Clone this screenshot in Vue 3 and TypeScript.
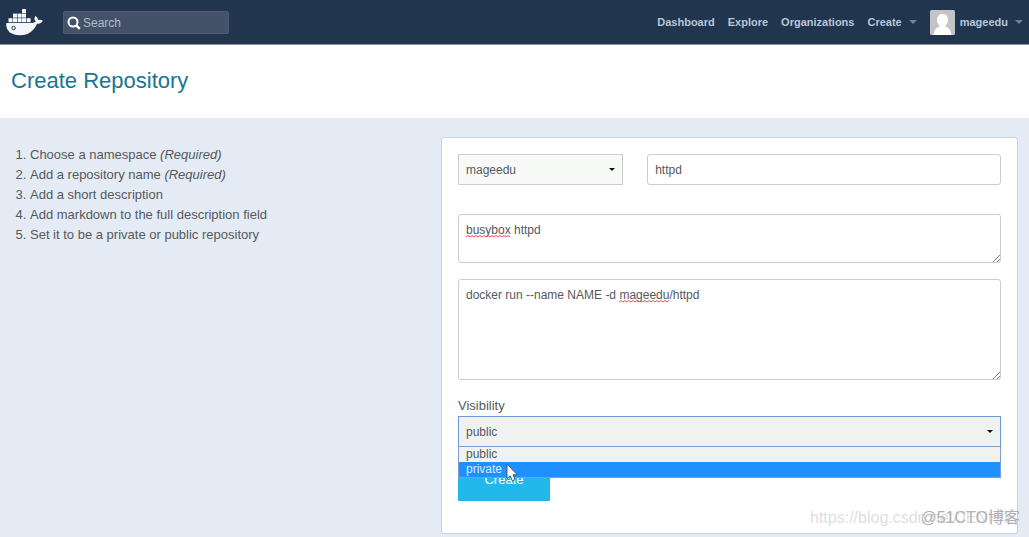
<script setup lang="ts">
import { ref } from 'vue'

interface Step {
  text: string
  required?: boolean
}

const links: string[] = ['Dashboard', 'Explore', 'Organizations']
const steps: Step[] = [
  { text: 'Choose a namespace', required: true },
  { text: 'Add a repository name', required: true },
  { text: 'Add a short description' },
  { text: 'Add markdown to the full description field' },
  { text: 'Set it to be a private or public repository' },
]
const options: string[] = ['public', 'private']

const query = ref('')
const namespace = ref('mageedu')
const repoName = ref('httpd')
const shortText = ref('busybox httpd')
const fullText = ref('docker run --name NAME -d mageedu/httpd')
const visibility = ref('public')
const highlighted = ref('private')
</script>

<template>
  <div class="page">
    <header class="topbar">
      <a class="logo" href="#" aria-label="Docker Hub">
        <svg viewBox="0 0 37 27" width="37" height="27" aria-hidden="true">
          <g fill="#f4f8fc">
            <rect x="16" y="0" width="4" height="4" />
            <rect x="7" y="4.600" width="4" height="4" />
            <rect x="11.600" y="4.600" width="4" height="4" />
            <rect x="16" y="4.600" width="4" height="4" />
            <rect x="2.500" y="9.200" width="4" height="4" />
            <rect x="7" y="9.200" width="4" height="4" />
            <rect x="11.600" y="9.200" width="4" height="4" />
            <rect x="16" y="9.200" width="4" height="4" />
            <rect x="20.600" y="9.200" width="4" height="4" />
            <path d="M.3 14H25.500C27.500 14 29 13.400 29.800 12.600C28 10.800 28.100 8.500 29.600 7C31.400 8.200 32 9.700 31.900 11C33.500 10.500 35.500 10.700 36.800 11.700C35.600 14 33.400 14.900 31 14.800C28.300 21.500 22.600 26.300 14 26.300C5 26.300-.4 22 .3 14Z" />
          </g>
          <circle cx="7.600" cy="19" r="1.700" fill="#fff" stroke="#22354f" stroke-width="1" />
        </svg>
      </a>
      <label class="search">
        <svg viewBox="0 0 14 14" width="14" height="14" aria-hidden="true">
          <circle cx="6" cy="6" r="4.500" fill="none" stroke="#fff" stroke-width="2" />
          <path d="M9.300 9.300 12.800 12.800" stroke="#fff" stroke-width="2.400" />
        </svg>
        <input v-model="query" type="search" placeholder="Search" aria-label="Search" />
      </label>
      <nav class="nav">
        <a v-for="link in links" :key="link" href="#">{{ link }}</a>
        <button type="button" class="menu">Create<span class="caret"></span></button>
        <button type="button" class="menu">
          <svg class="avatar" viewBox="0 0 25 25" width="25" height="25" aria-hidden="true">
            <rect width="25" height="25" rx="1.500" fill="#c3c4c5" />
            <path d="M3.500 25C4 20 6.500 17.500 10 16.200C7.800 14.500 7 12 7 9.500C7 6 9.300 4 12.500 4S18 6 18 9.500C18 12 17.200 14.500 15 16.200C18.500 17.500 21 20 21.500 25Z" fill="#fff" />
          </svg>
          <span>mageedu</span><span class="caret"></span>
        </button>
      </nav>
    </header>

    <div class="heading"><h1>Create Repository</h1></div>

    <main class="content">
      <ol class="steps">
        <li v-for="step in steps" :key="step.text">
          {{ step.text }} <em v-if="step.required">(Required)</em>
        </li>
      </ol>

      <form class="card" @submit.prevent>
        <div class="row">
          <div class="select">
            <select v-model="namespace" class="field" aria-label="Namespace">
              <option>mageedu</option>
            </select>
            <span class="arrow"></span>
          </div>
          <input v-model="repoName" class="field" type="text" aria-label="Repository name" />
        </div>
        <div class="area">
          <textarea v-model="shortText" class="field short" aria-label="Short description" spellcheck="false"></textarea>
          <svg class="squiggle first" aria-hidden="true"><use href="#wave" /></svg>
          <svg class="grip" viewBox="0 0 8 8" aria-hidden="true"><path d="M1 8 8 1M5 8 8 5" /></svg>
        </div>
        <div class="area">
          <textarea v-model="fullText" class="field full" aria-label="Full description" spellcheck="false"></textarea>
          <svg class="squiggle second" aria-hidden="true"><use href="#wave" /></svg>
          <svg class="grip" viewBox="0 0 8 8" aria-hidden="true"><path d="M1 8 8 1M5 8 8 5" /></svg>
        </div>
        <svg class="defs" aria-hidden="true">
          <defs>
            <pattern id="zigzag" width="4" height="3" patternUnits="userSpaceOnUse">
              <path d="M0 2 2 .5 4 2" fill="none" stroke="#e8505c" stroke-width="1" />
            </pattern>
            <rect id="wave" width="100" height="3" fill="url(#zigzag)" />
          </defs>
        </svg>
        <label class="caption" for="visibility">Visibility</label>
        <div class="select open">
          <select id="visibility" v-model="visibility" class="field">
            <option v-for="option in options" :key="option">{{ option }}</option>
          </select>
          <span class="arrow"></span>
          <ul class="dropdown" role="listbox" aria-label="Visibility">
            <li
              v-for="option in options"
              :key="option"
              role="option"
              :aria-selected="option === highlighted"
              :class="{ active: option === highlighted }"
              @mouseenter="highlighted = option"
              @click="visibility = option"
            >{{ option }}</li>
          </ul>
          <svg class="pointer" viewBox="0 0 12 19" width="12" height="19" aria-hidden="true">
            <path d="M1 1V15.500L4.200 12.800 6.300 17.800 9 16.700 7 11.800H11.300Z" fill="#fff" stroke="#46586e" stroke-width="1" />
          </svg>
        </div>
        <button type="submit" class="submit">Create</button>
      </form>
    </main>

    <div class="marks">
      <span class="site">https://blog.csdn.net/JENHfE</span>
      <span class="brand">@51CTO博客</span>
    </div>
  </div>
</template>

<style>
body {
  margin: 0;
  background: #e4ebf4;
}
</style>

<style scoped>
.page {
  position: relative;
  box-sizing: border-box;
  min-height: 100vh;
  color: #55595c;
  font-family: "Liberation Sans", Arial, sans-serif;
  font-size: 13px;
}
.page * {
  box-sizing: border-box;
}
.topbar {
  display: flex;
  align-items: center;
  height: 45px;
  padding: 0 6px;
  background: #22354f;
  border-bottom: 1px solid #8c959f;
}
.logo {
  display: flex;
  margin-right: 20px;
}
.search {
  display: flex;
  align-items: center;
  gap: 2px;
  width: 166px;
  height: 23px;
  padding: 1px 3px 0;
  border: 1px solid #4b5b71;
  border-radius: 2px;
  background: #435269;
}
.search svg {
  flex: none;
}
.search input {
  width: 100%;
  min-width: 0;
  padding: 0;
  border: 0;
  outline: 0;
  background: none;
  color: #fff;
  font: 12px "Liberation Sans", Arial, sans-serif;
}
.search input::placeholder {
  color: #b4bcc8;
}
.nav {
  display: flex;
  align-items: center;
  gap: 13px;
  margin-left: auto;
}
.nav a,
.menu {
  color: #b8c6d9;
  font: bold 11px "Liberation Sans", Arial, sans-serif;
  text-decoration: none;
}
.menu {
  display: flex;
  align-items: center;
  padding: 0;
  border: 0;
  background: none;
}
.caret {
  margin-left: 7px;
  border: 4px solid transparent;
  border-top-color: #71839b;
  border-bottom: 0;
}
.avatar {
  margin-right: 5px;
}
.heading {
  padding: 23px 11px 25px;
  background: #fff;
}
h1 {
  margin: 0;
  color: #187693;
  font-size: 22px;
  font-weight: 400;
  line-height: 25px;
}
.content {
  display: grid;
  grid-template-columns: 3fr 4fr;
  align-items: start;
  padding: 19px 0 3px;
}
.steps {
  margin: 0;
  padding: 8px 0 0 30px;
  line-height: 20px;
}
.card {
  margin-right: 11px;
  padding: 16px 16px 32px;
  border: 1px solid #c5d2e2;
  border-radius: 3px;
  background: #fff;
}
.row {
  display: grid;
  grid-template-columns: 7fr 15fr;
  gap: 24px;
  margin-bottom: 29px;
}
.field {
  display: block;
  width: 100%;
  height: 31px;
  margin: 0;
  padding: 0 7px;
  border: 1px solid #ccc;
  border-radius: 3px;
  outline: 0;
  background: #fff;
  color: #55595c;
  font: 12px "Liberation Sans", Arial, sans-serif;
}
.select {
  position: relative;
}
.select .field {
  appearance: none;
  border-radius: 0;
  background: #f8faf7;
}
.arrow {
  position: absolute;
  top: 14px;
  right: 8px;
  border: 3px solid transparent;
  border-top-color: #111;
  border-bottom: 0;
}
.area {
  position: relative;
  margin-bottom: 16px;
}
textarea.field {
  padding: 8px 7px;
  line-height: 14px;
  resize: none;
}
textarea.short {
  height: 49px;
}
textarea.full {
  height: 101px;
}
.squiggle {
  position: absolute;
  top: 21px;
  left: 8px;
  height: 3px;
}
.first {
  width: 44px;
}
.second {
  left: 161px;
  width: 50px;
}
.grip {
  position: absolute;
  right: 1px;
  bottom: 1px;
  width: 8px;
  height: 8px;
  fill: none;
  stroke: #777;
}
.defs {
  display: block;
  width: 0;
  height: 0;
}
.caption {
  display: block;
  padding: 1px 0;
  line-height: 18px;
}
.open .field {
  border: 1px solid #6f98dc;
  background: #f0f2f0;
}
.dropdown {
  position: absolute;
  z-index: 1;
  top: 30px;
  left: 0;
  width: 100%;
  margin: 0;
  padding: 0;
  border: 1px solid #7d9ed0;
  background: #f0f2f0;
  font-size: 12px;
  line-height: 15px;
  list-style: none;
}
.dropdown li {
  padding: 0 7px;
}
.dropdown .active {
  background: #1e90ff;
  color: #dcebff;
}
.pointer {
  position: absolute;
  z-index: 2;
  top: 47px;
  left: 48px;
}
.submit {
  display: block;
  width: 92px;
  height: 43px;
  margin-top: 11px;
  padding: 0;
  border: 0;
  background: #22b8eb;
  color: #fff;
  font: 13px "Liberation Sans", Arial, sans-serif;
}
.marks {
  position: absolute;
  right: 9px;
  bottom: 9px;
  display: grid;
  width: 210px;
  font-family: "Liberation Sans", "Noto Sans CJK SC", sans-serif;
  font-size: 16px;
  line-height: 20px;
  pointer-events: none;
}
.marks span {
  grid-area: 1 / 1;
}
.site {
  color: #dfe0e1;
}
.brand {
  justify-self: end;
  color: #b0b1b3;
}
</style>
